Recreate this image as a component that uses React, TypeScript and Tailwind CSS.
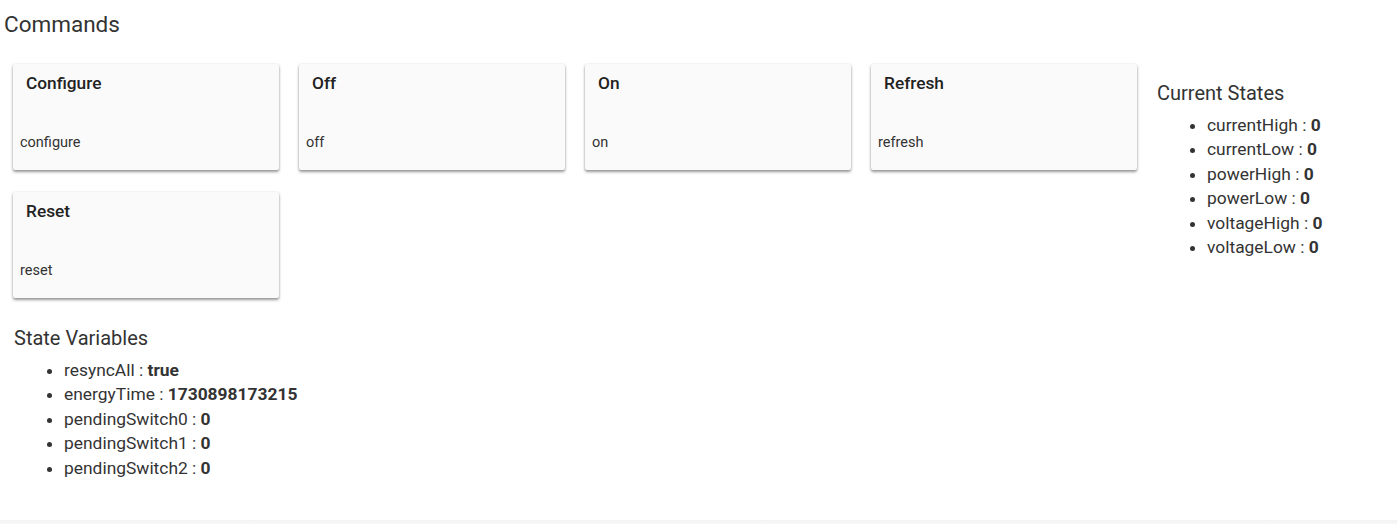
const commands = [
  { title: "Configure", name: "configure" },
  { title: "Off", name: "off" },
  { title: "On", name: "on" },
  { title: "Refresh", name: "refresh" },
  { title: "Reset", name: "reset" },
];

const currentStates = [
  ["currentHigh", "0"],
  ["currentLow", "0"],
  ["powerHigh", "0"],
  ["powerLow", "0"],
  ["voltageHigh", "0"],
  ["voltageLow", "0"],
];

const stateVariables = [
  ["resyncAll", "true"],
  ["energyTime", "1730898173215"],
  ["pendingSwitch0", "0"],
  ["pendingSwitch1", "0"],
  ["pendingSwitch2", "0"],
];

function ValueList({ items }: { items: string[][] }) {
  return (
    <ul className="list-disc pl-[50px] text-[17.4px] leading-[24.5px] text-[#333] marker:text-[#333]">
      {items.map(([k, v]) => (
        <li key={k}>
          {k} : <b className="font-bold">{v}</b>
        </li>
      ))}
    </ul>
  );
}

function CommandCard({ title, name }: { title: string; name: string }) {
  return (
    <div className="w-[266px] h-[106px] bg-[#fafafa] rounded-[2px] shadow-[0_2px_3px_rgba(0,0,0,0.4),0_0_2px_rgba(0,0,0,0.12)]">
      <div className="pl-[13px] pt-[7px] text-[17.3px] leading-[24px] font-medium text-[#222]">{title}</div>
      <div className="pl-[7px] mt-[38px] text-[14.5px] leading-[20px] text-[#333]">{name}</div>
    </div>
  );
}

export default function App() {
  return (
    <div className="w-[1397px] h-[524px] bg-white font-['Roboto',sans-serif] text-[#333] flex flex-col">
      <div className="h-[520px]">
        <div className="pl-[4px] pt-[10px] text-[22.5px] leading-[28px]">Commands</div>
        <div className="flex mt-[26px]">
          <div className="w-[1144px] pl-[13px] flex flex-wrap gap-x-[20px] gap-y-[22px]">
            {commands.map((c) => (
              <CommandCard key={c.name} {...c} />
            ))}
          </div>
          <div className="pl-[13px] pt-[17px]">
            <div className="text-[20px] leading-[24px] mb-[7.5px]">Current States</div>
            <ValueList items={currentStates} />
          </div>
        </div>
        <div className="pl-[14px] mt-[28px]">
          <div className="text-[20px] leading-[24px] mb-[7.5px]">State Variables</div>
          <ValueList items={stateVariables} />
        </div>
      </div>
      <div className="flex-1 bg-gradient-to-b from-[#f3f3f3] to-[#f8f8f8]" />
    </div>
  );
}
